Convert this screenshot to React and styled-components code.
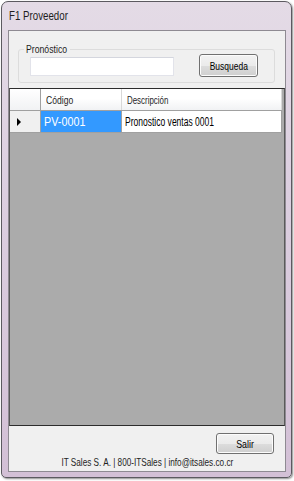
import React from 'react';
import styled, { createGlobalStyle } from 'styled-components';

const GlobalStyle = createGlobalStyle`
  html, body {
    margin: 0;
    padding: 0;
    background: #ffffff;
  }
  body {
    font-family: "Liberation Sans", Arial, sans-serif;
    font-size: 11px;
    color: #000;
  }
`;

// the reference font is a narrow Windows face, squeeze Liberation Sans to match
const Txt = styled.span`
  display: inline-block;
  white-space: nowrap;
  transform: scaleX(${p => p.$sx || 0.76});
  transform-origin: ${p => (p.$center ? 'center' : 'left')} center;
`;

const Page = styled.div`
  width: 294px;
  height: 481px;
  padding: 1px 2px 3px 1px;
  box-sizing: border-box;
`;

const Window = styled.div`
  height: 100%;
  box-sizing: border-box;
  border: 1px solid #5c5a60;
  border-radius: 7px 7px 5px 5px;
  background: linear-gradient(to bottom, #e4dbe6 0%, #dccfe0 40%, #d3c0d6 100%);
  box-shadow: 1px 1px 2px rgba(0, 0, 0, 0.45);
  display: flex;
  flex-direction: column;
  padding: 0 5px 5px 6px;
`;

const TitleBar = styled.div`
  height: 28px;
  display: flex;
  align-items: center;
  padding-left: 1px;
  font-size: 12px;
  color: #1e1e1e;
`;

const Client = styled.div`
  flex: 1;
  border: 1px solid #8e8a92;
  background: #f0f0f0;
  display: flex;
  flex-direction: column;
  min-height: 0;
`;

const SearchPanel = styled.div`
  height: 57px;
  padding: 18px 10px 0 9px;
  box-sizing: border-box;
`;

const GroupBox = styled.div`
  height: 34px;
  box-sizing: border-box;
  border: 1px solid #dcdcdc;
  border-radius: 3px;
  padding: 4px 16px 0 11px;
  display: flex;
  align-items: flex-start;
  justify-content: space-between;
  position: relative;
`;

const Legend = styled.div`
  position: absolute;
  top: -8px;
  left: 5px;
  width: 42px;
  padding: 0 2px;
  background: #f0f0f0;
  color: #1e1e1e;
  line-height: 14px;
`;

const TextBox = styled.div`
  width: 144px;
  height: 19px;
  margin-top: 3px;
  box-sizing: border-box;
  background: #fff;
  border: 1px solid #e2e3ea;
  border-top-color: #d4d6de;
`;

const Button = styled.button`
  width: ${p => p.$w}px;
  height: ${p => p.$h}px;
  box-sizing: border-box;
  border: 1px solid #707070;
  border-radius: 3px;
  background: linear-gradient(to bottom, #f2f2f2 0%, #ebebeb 50%, #dddddd 51%, #cfcfcf 100%);
  box-shadow: inset 0 0 0 1px #fcfcfc;
  font-family: inherit;
  font-size: 11px;
  color: #000;
  padding: 0;
  display: flex;
  align-items: center;
  justify-content: center;
`;

const Grid = styled.div`
  flex: 1;
  background: #ababab;
  border-top: 1px solid #2c2c2c;
  border-bottom: 1px solid #2c2c2c;
  border-left: 1px solid #5a5a5a;
  border-right: 1px solid #5a5a5a;
  display: flex;
  flex-direction: column;
`;

const Row = styled.div`
  display: flex;
  height: 21px;
  margin-right: 2px;
  border-bottom: 1px solid #a0a0a0;
  background: #fff;
`;

const RowHead = styled.div`
  width: 31px;
  border-right: 1px solid #a0a0a0;
  background: ${p => (p.$header ? 'linear-gradient(to bottom, #ffffff, #f1f2f4)' : '#f0f0f0')};
  display: flex;
  align-items: center;
  padding-left: 7px;
  box-sizing: border-box;
`;

const HeadCell = styled.div`
  width: ${p => (p.$w ? `${p.$w}px` : 'auto')};
  flex: ${p => (p.$w ? 'none' : 1)};
  border-right: 1px solid #d8d8d8;
  background: linear-gradient(to bottom, #ffffff 0%, #ffffff 45%, #f1f2f4 100%);
  padding-left: 5px;
  display: flex;
  align-items: center;
  box-sizing: border-box;
  color: #1e1e1e;
`;

const Cell = styled.div`
  width: ${p => (p.$w ? `${p.$w}px` : 'auto')};
  flex: ${p => (p.$w ? 'none' : 1)};
  border-right: 1px solid #a0a0a0;
  background: ${p => (p.$selected ? '#3399ff' : '#ffffff')};
  color: ${p => (p.$selected ? '#ffffff' : '#000000')};
  padding-left: 3px;
  display: flex;
  align-items: center;
  font-size: 12px;
  box-sizing: border-box;
`;

const Arrow = styled.div`
  width: 0;
  height: 0;
  border-top: 4px solid transparent;
  border-bottom: 4px solid transparent;
  border-left: 4px solid #000;
`;

const BottomPanel = styled.div`
  height: 45px;
  display: flex;
  flex-direction: column;
  align-items: flex-end;
  padding: 7px 11px 0 0;
  box-sizing: border-box;
`;

const Footer = styled.div`
  align-self: center;
  margin-left: 11px;
  margin-top: 2px;
  color: #1e1e1e;
  line-height: 13px;
`;

export default function App() {
  return (
    <Page>
      <GlobalStyle />
      <Window>
        <TitleBar>
          <Txt $sx={0.81}>F1 Proveedor</Txt>
        </TitleBar>
        <Client>
          <SearchPanel>
            <GroupBox>
              <Legend>
                <Txt $sx={0.79}>Pronóstico</Txt>
              </Legend>
              <TextBox />
              <Button $w={59} $h={23}>
                <Txt $center $sx={0.77}>Busqueda</Txt>
              </Button>
            </GroupBox>
          </SearchPanel>
          <Grid>
            <Row>
              <RowHead $header />
              <HeadCell $w={81}>
                <Txt $sx={0.78}>Código</Txt>
              </HeadCell>
              <HeadCell>
                <Txt $sx={0.72}>Descripción</Txt>
              </HeadCell>
            </Row>
            <Row>
              <RowHead>
                <Arrow />
              </RowHead>
              <Cell $w={81} $selected>
                <Txt $sx={0.9}>PV-0001</Txt>
              </Cell>
              <Cell>
                <Txt $sx={0.71}>Pronostico ventas 0001</Txt>
              </Cell>
            </Row>
          </Grid>
          <BottomPanel>
            <Button $w={58} $h={21}>
              <Txt $center $sx={0.8}>Salir</Txt>
            </Button>
            <Footer>
              <Txt $center $sx={0.745}>IT Sales S. A. | 800-ITSales | info@itsales.co.cr</Txt>
            </Footer>
          </BottomPanel>
        </Client>
      </Window>
    </Page>
  );
}
